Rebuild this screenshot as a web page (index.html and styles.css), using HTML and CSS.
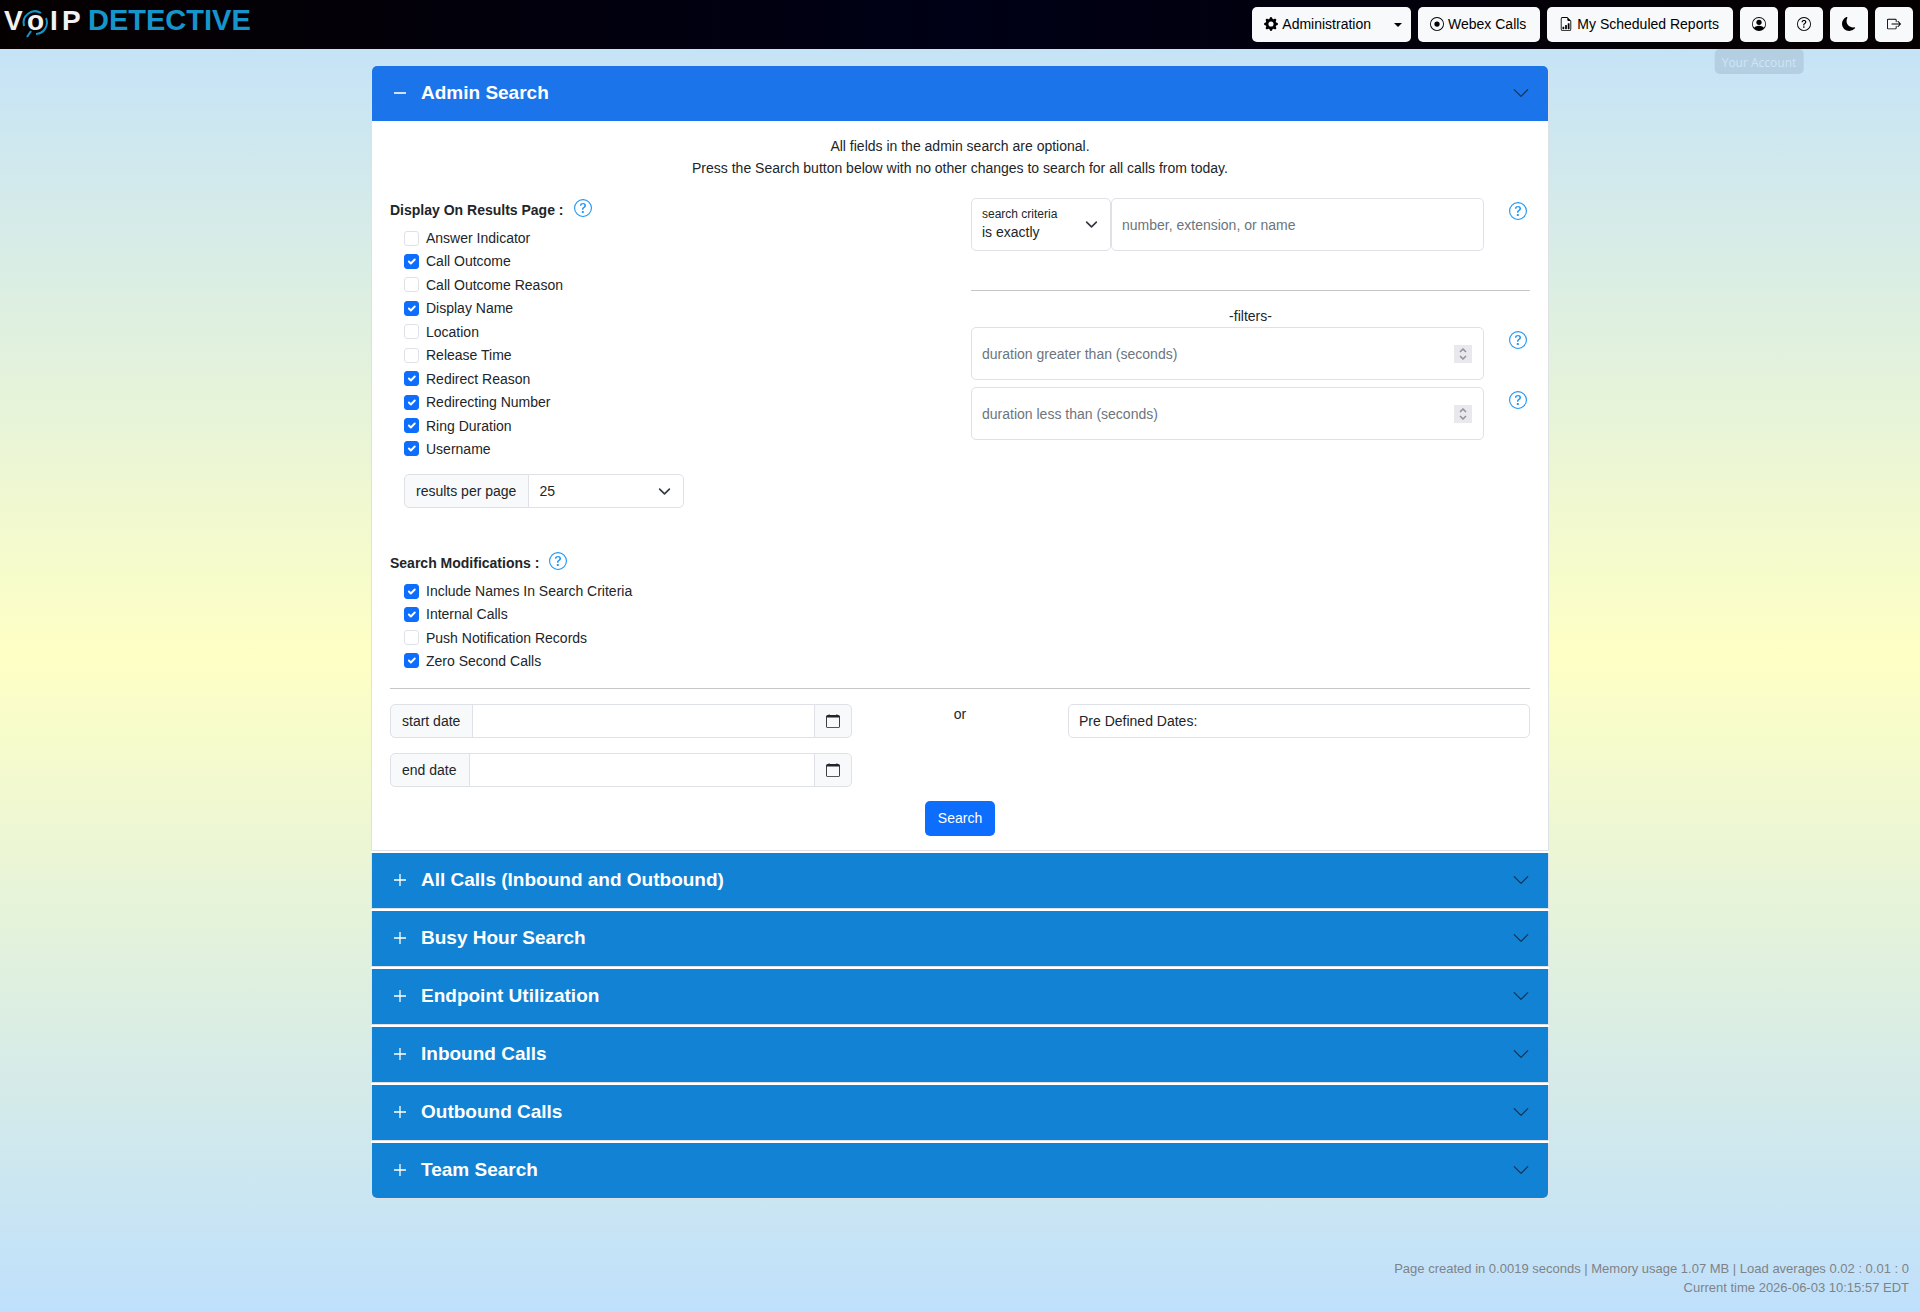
FILE: index.html
```html
<!DOCTYPE html>
<html lang="en">
<head>
<meta charset="utf-8">
<meta name="viewport" content="width=device-width, initial-scale=1">
<title>VoIP Detective</title>
<link rel="stylesheet" href="styles.css">
</head>
<body>
<svg class="sprite" aria-hidden="true">
  <symbol id="i-gear" viewBox="0 0 16 16"><path d="M9.405 1.05c-.413-1.4-2.397-1.4-2.81 0l-.1.34a1.464 1.464 0 0 1-2.105.872l-.31-.17c-1.283-.698-2.686.705-1.987 1.987l.169.311c.446.82.023 1.841-.872 2.105l-.34.1c-1.4.413-1.4 2.397 0 2.81l.34.1a1.464 1.464 0 0 1 .872 2.105l-.17.31c-.698 1.283.705 2.686 1.987 1.987l.311-.169a1.464 1.464 0 0 1 2.105.872l.1.34c.413 1.4 2.397 1.4 2.81 0l.1-.34a1.464 1.464 0 0 1 2.105-.872l.31.17c1.283.698 2.686-.705 1.987-1.987l-.169-.311a1.464 1.464 0 0 1 .872-2.105l.34-.1c1.4-.413 1.4-2.397 0-2.81l-.34-.1a1.464 1.464 0 0 1-.872-2.105l.17-.31c.698-1.283-.705-2.686-1.987-1.987l-.311.169a1.464 1.464 0 0 1-2.105-.872zM8 10.93a2.929 2.929 0 1 1 0-5.86 2.929 2.929 0 0 1 0 5.858z"/></symbol>
  <symbol id="i-record" viewBox="0 0 16 16"><path d="M8 15A7 7 0 1 1 8 1a7 7 0 0 1 0 14m0 1A8 8 0 1 0 8 0a8 8 0 0 0 0 16"/><path d="M11 8a3 3 0 1 1-6 0 3 3 0 0 1 6 0"/></symbol>
  <symbol id="i-report" viewBox="0 0 16 16"><path d="M10 13.5a.5.5 0 0 0 .5.5h1a.5.5 0 0 0 .5-.5v-6a.5.5 0 0 0-.5-.5h-1a.5.5 0 0 0-.5.5zm-2.5.5a.5.5 0 0 1-.5-.5v-4a.5.5 0 0 1 .5-.5h1a.5.5 0 0 1 .5.5v4a.5.5 0 0 1-.5.5zm-3 0a.5.5 0 0 1-.5-.5v-2a.5.5 0 0 1 .5-.5h1a.5.5 0 0 1 .5.5v2a.5.5 0 0 1-.5.5z"/><path d="M14 14V4.5L9.5 0H4a2 2 0 0 0-2 2v12a2 2 0 0 0 2 2h8a2 2 0 0 0 2-2M9.5 3A1.5 1.5 0 0 0 11 4.5h2V14a1 1 0 0 1-1 1H4a1 1 0 0 1-1-1V2a1 1 0 0 1 1-1h5.500z"/></symbol>
  <symbol id="i-person" viewBox="0 0 16 16"><path d="M11 6a3 3 0 1 1-6 0 3 3 0 0 1 6 0"/><path fill-rule="evenodd" d="M0 8a8 8 0 1 1 16 0A8 8 0 0 1 0 8m8-7a7 7 0 0 0-5.468 11.370C3.242 11.226 4.805 10 8 10s4.757 1.225 5.468 2.370A7 7 0 0 0 8 1"/></symbol>
  <symbol id="i-help" viewBox="0 0 16 16"><path d="M8 15A7 7 0 1 1 8 1a7 7 0 0 1 0 14m0 1A8 8 0 1 0 8 0a8 8 0 0 0 0 16"/><path d="M5.255 5.786a.237.237 0 0 0 .241.247h.825c.138 0 .248-.113.266-.25.09-.656.54-1.134 1.342-1.134.686 0 1.314.343 1.314 1.168 0 .635-.374.927-.965 1.371-.673.489-1.206 1.060-1.168 1.987l.003.217a.25.25 0 0 0 .25.246h.811a.25.25 0 0 0 .25-.25v-.105c0-.718.273-.927 1.010-1.486.609-.463 1.244-.977 1.244-2.056 0-1.511-1.276-2.241-2.673-2.241-1.267 0-2.655.59-2.750 2.286m1.557 5.763c0 .533.425.927 1.010.927.609 0 1.028-.394 1.028-.927 0-.552-.42-.94-1.029-.94-.584 0-1.009.388-1.009.94"/></symbol>
  <symbol id="i-moon" viewBox="0 0 16 16"><path d="M6 .278a.77.77 0 0 1 .08.858 7.2 7.2 0 0 0-.878 3.460c0 4.021 3.278 7.277 7.318 7.277q.792-.001 1.533-.16a.79.79 0 0 1 .81.316.73.73 0 0 1-.031.893A8.350 8.350 0 0 1 8.344 16C3.734 16 0 12.286 0 7.710 0 4.266 2.114 1.312 5.124.06A.75.75 0 0 1 6 .278"/></symbol>
  <symbol id="i-exit" viewBox="0 0 16 16"><path fill-rule="evenodd" d="M10 12.500a.5.5 0 0 1-.5.5h-8a.5.5 0 0 1-.5-.5v-9a.5.5 0 0 1 .5-.5h8a.5.5 0 0 1 .5.5v2a.5.5 0 0 0 1 0v-2A1.500 1.500 0 0 0 9.500 2h-8A1.500 1.500 0 0 0 0 3.500v9A1.500 1.500 0 0 0 1.500 14h8a1.500 1.500 0 0 0 1.500-1.500v-2a.5.5 0 0 0-1 0z"/><path fill-rule="evenodd" d="M15.854 8.354a.5.5 0 0 0 0-.708l-3-3a.5.5 0 0 0-.708.708L14.293 7.500H5.500a.5.5 0 0 0 0 1h8.793l-2.147 2.146a.5.5 0 0 0 .708.708z"/></symbol>
  <symbol id="i-calendar" viewBox="0 0 16 16"><path d="M3.500 0a.5.5 0 0 1 .5.5V1h8V.5a.5.5 0 0 1 1 0V1h1a2 2 0 0 1 2 2v11a2 2 0 0 1-2 2H2a2 2 0 0 1-2-2V3a2 2 0 0 1 2-2h1V.5a.5.5 0 0 1 .5-.5M1 4v10a1 1 0 0 0 1 1h12a1 1 0 0 0 1-1V4z"/></symbol>
  <symbol id="i-plus" viewBox="0 0 16 16"><path d="M8 2v12M2 8h12" fill="none" stroke="currentColor" stroke-width="1.300"/></symbol>
  <symbol id="i-minus" viewBox="0 0 16 16"><path d="M2 8h12" fill="none" stroke="currentColor" stroke-width="1.600"/></symbol>
  <symbol id="i-chevron" viewBox="0 0 16 16"><path d="m2 5 6 6 6-6" fill="none" stroke="currentColor" stroke-linecap="round" stroke-linejoin="round"/></symbol>
</svg>

<header class="topbar">
  <a class="brand" href="#" aria-label="VoIP Detective home">
    <svg class="logo" viewBox="0 0 256 42" aria-hidden="true">
      <g class="logo-text">
        <text x="4" y="30" class="logo-light">V</text>
        <text x="27" y="30" class="logo-light">o</text>
        <text x="50" y="30" class="logo-light">I</text>
        <text x="62" y="30" class="logo-light">P</text>
        <text x="88" y="30" class="logo-blue">DETECTIVE</text>
      </g>
      <g class="logo-lens">
        <path d="M24 26A11.500 11.500 0 0 1 41 13"/>
        <path d="M46 18A11.500 11.500 0 0 1 36 34"/>
        <path d="M31 31L27 37"/>
      </g>
    </svg>
  </a>
  <nav class="actions" aria-label="Main">
    <div class="split">
      <button type="button" class="btn"><svg class="icon"><use href="#i-gear"/></svg>Administration</button>
      <button type="button" class="btn btn-caret" aria-label="Toggle administration menu"><span class="caret"></span></button>
    </div>
    <button type="button" class="btn"><svg class="icon"><use href="#i-record"/></svg>Webex Calls</button>
    <button type="button" class="btn"><svg class="icon"><use href="#i-report"/></svg>My Scheduled Reports</button>
    <div class="tip-anchor">
      <button type="button" class="btn btn-icon" aria-label="Your Account"><svg class="icon"><use href="#i-person"/></svg></button>
      <span class="tooltip" role="tooltip">Your Account</span>
    </div>
    <button type="button" class="btn btn-icon" aria-label="Help"><svg class="icon"><use href="#i-help"/></svg></button>
    <button type="button" class="btn btn-icon" aria-label="Dark mode"><svg class="icon"><use href="#i-moon"/></svg></button>
    <button type="button" class="btn btn-icon" aria-label="Log out"><svg class="icon"><use href="#i-exit"/></svg></button>
  </nav>
</header>

<main class="accordion">
  <section class="item">
    <h2><button type="button" class="item-head is-open" aria-expanded="true"><svg class="sign"><use href="#i-minus"/></svg>Admin Search<svg class="chev"><use href="#i-chevron"/></svg></button></h2>
    <form class="panel">
      <p class="intro">All fields in the admin search are optional.<br>Press the Search button below with no other changes to search for all calls from today.</p>
      <div class="columns">
        <div>
          <div class="legend"><h3>Display On Results Page :</h3><button type="button" class="help" aria-label="Help on display options"><svg><use href="#i-help"/></svg></button></div>
          <div class="checks checks-display">
            <label><input type="checkbox">Answer Indicator</label>
            <label><input type="checkbox" checked>Call Outcome</label>
            <label><input type="checkbox">Call Outcome Reason</label>
            <label><input type="checkbox" checked>Display Name</label>
            <label><input type="checkbox">Location</label>
            <label><input type="checkbox">Release Time</label>
            <label><input type="checkbox" checked>Redirect Reason</label>
            <label><input type="checkbox" checked>Redirecting Number</label>
            <label><input type="checkbox" checked>Ring Duration</label>
            <label><input type="checkbox" checked>Username</label>
          </div>
          <div class="group per-page">
            <label class="addon" for="per-page">results per page</label>
            <select class="control select" id="per-page"><option>25</option><option>50</option><option>100</option></select>
          </div>
          <div class="legend"><h3>Search Modifications :</h3><button type="button" class="help" aria-label="Help on search modifications"><svg><use href="#i-help"/></svg></button></div>
          <div class="checks">
            <label><input type="checkbox" checked>Include Names In Search Criteria</label>
            <label><input type="checkbox" checked>Internal Calls</label>
            <label><input type="checkbox">Push Notification Records</label>
            <label><input type="checkbox" checked>Zero Second Calls</label>
          </div>
        </div>
        <div>
          <div class="field">
            <div class="criteria">
              <div class="floating">
                <select class="control select tall" id="criteria"><option>is exactly</option><option>contains</option></select>
                <label for="criteria">search criteria</label>
              </div>
              <input class="control tall" type="text" placeholder="number, extension, or name" aria-label="number, extension, or name">
            </div>
            <button type="button" class="help" aria-label="Help on search criteria"><svg><use href="#i-help"/></svg></button>
          </div>
          <hr class="rule rule-filters">
          <p class="filters">-filters-</p>
          <div class="field">
            <input class="control tall number" type="number" placeholder="duration greater than (seconds)" aria-label="duration greater than (seconds)">
            <button type="button" class="help" aria-label="Help on minimum duration"><svg><use href="#i-help"/></svg></button>
          </div>
          <div class="field">
            <input class="control tall number" type="number" placeholder="duration less than (seconds)" aria-label="duration less than (seconds)">
            <button type="button" class="help" aria-label="Help on maximum duration"><svg><use href="#i-help"/></svg></button>
          </div>
        </div>
      </div>
      <hr class="rule">
      <div class="dates">
        <div class="range">
          <div class="group">
            <label class="addon" for="start">start date</label>
            <input class="control" type="text" id="start">
            <button type="button" class="addon addon-btn" aria-label="Pick start date"><svg class="icon"><use href="#i-calendar"/></svg></button>
          </div>
          <div class="group">
            <label class="addon" for="end">end date</label>
            <input class="control" type="text" id="end">
            <button type="button" class="addon addon-btn" aria-label="Pick end date"><svg class="icon"><use href="#i-calendar"/></svg></button>
          </div>
        </div>
        <p class="or">or</p>
        <div class="group">
          <select class="control" aria-label="Pre defined dates"><option>Pre Defined Dates:</option></select>
        </div>
      </div>
      <button type="submit" class="submit">Search</button>
    </form>
  </section>
  <section class="item"><h2><button type="button" class="item-head" aria-expanded="false"><svg class="sign"><use href="#i-plus"/></svg>All Calls (Inbound and Outbound)<svg class="chev"><use href="#i-chevron"/></svg></button></h2></section>
  <section class="item"><h2><button type="button" class="item-head" aria-expanded="false"><svg class="sign"><use href="#i-plus"/></svg>Busy Hour Search<svg class="chev"><use href="#i-chevron"/></svg></button></h2></section>
  <section class="item"><h2><button type="button" class="item-head" aria-expanded="false"><svg class="sign"><use href="#i-plus"/></svg>Endpoint Utilization<svg class="chev"><use href="#i-chevron"/></svg></button></h2></section>
  <section class="item"><h2><button type="button" class="item-head" aria-expanded="false"><svg class="sign"><use href="#i-plus"/></svg>Inbound Calls<svg class="chev"><use href="#i-chevron"/></svg></button></h2></section>
  <section class="item"><h2><button type="button" class="item-head" aria-expanded="false"><svg class="sign"><use href="#i-plus"/></svg>Outbound Calls<svg class="chev"><use href="#i-chevron"/></svg></button></h2></section>
  <section class="item"><h2><button type="button" class="item-head" aria-expanded="false"><svg class="sign"><use href="#i-plus"/></svg>Team Search<svg class="chev"><use href="#i-chevron"/></svg></button></h2></section>
</main>

<footer class="stats">
  <p>Page created in 0.0019 seconds | Memory usage 1.07 MB | Load averages 0.02 : 0.01 : 0</p>
  <p>Current time 2026-06-03 10:15:57 EDT</p>
</footer>
</body>
</html>
```
FILE: styles.css
```css
*, *::before, *::after { box-sizing: border-box; }

body {
  margin: 0;
  min-height: 100vh;
  display: flex;
  flex-direction: column;
  font: 14px/22px "Liberation Sans", Arial, sans-serif;
  color: #212529;
  background: linear-gradient(#c1e1fb, #feffc4 50%, #bfe0fc);
}

h2, h3, p { margin: 0; }
button, input, select { font: inherit; color: inherit; margin: 0; }
svg { fill: currentColor; flex: none; }
.sprite { display: none; }

/* Top bar */
.topbar {
  display: flex;
  justify-content: space-between;
  height: 49px;
  background: linear-gradient(90deg, #050000, #000016 50%, #050000);
}
.brand { display: block; }
.logo { display: block; width: 256px; height: 42px; }
.logo-text { font: bold 28px "Liberation Sans", Arial, sans-serif; }
.logo-light { fill: #f2f2f2; }
.logo-blue { fill: #1496cc; font-size: 29px; }
.logo-lens { fill: none; stroke: #1496cc; stroke-width: 2; }

.actions { display: flex; gap: 7px; padding: 7px 7px 0 0; }
.split { display: flex; }
.btn {
  display: inline-flex;
  align-items: center;
  justify-content: center;
  gap: 4px;
  height: 35px;
  padding: 0 14px 1px 12px;
  border: 0;
  border-radius: 5px;
  background: #f8f9fa;
  color: #000;
  white-space: nowrap;
}
.split .btn:first-child { border-radius: 5px 0 0 5px; }
.split .btn-caret { width: 26px; padding: 0; border-radius: 0 5px 5px 0; }
.btn-icon { width: 38px; padding: 0 0 1px; }
.icon { width: 14px; height: 14px; }
.caret { border: 4px solid transparent; border-top-color: #000; border-bottom: 0; }

.tip-anchor { position: relative; }
.tooltip {
  position: absolute;
  top: 42px;
  left: 50%;
  transform: translateX(-50%);
  padding: 3px 7px 1px;
  border-radius: 5px;
  background: #b4cfe2;
  color: #cfe5f6;
  font: 12px/21px "Open Sans", "Noto Sans", sans-serif;
  white-space: nowrap;
}

/* Accordion */
.accordion { width: 100%; max-width: 1178px; margin: 16px auto 0; }
.item {
  margin-bottom: 2px;
  border: 1px solid #dee2e6;
  border-top: 0;
  background: #fff;
  box-shadow: 0 2px #fff;
}
.item:first-child { border-top: 1px solid #cfe2f5; border-radius: 6px 6px 0 0; }
.item:last-child { border-radius: 0 0 6px 6px; box-shadow: none; }
.item:first-child .item-head { border-radius: 5px 5px 0 0; }
.item:last-child .item-head { border-radius: 0 0 5px 5px; }
.item-head {
  display: flex;
  align-items: center;
  gap: 13px;
  width: 100%;
  height: 55px;
  padding: 0 18px 1px 20px;
  border: 0;
  background: #1182d4;
  color: #fff;
  font-size: 19px;
  font-weight: bold;
  text-align: left;
}
.item-head.is-open { background: #1b74e9; }
.sign { width: 16px; height: 16px; }
.chev { width: 18px; height: 18px; margin-left: auto; color: #15304f; }

/* Admin search form */
.panel { padding: 14px 18px; }
.intro { text-align: center; }
.columns {
  display: grid;
  grid-template-columns: 1fr 1fr;
  gap: 22px;
  margin-top: 19px;
}
.legend { display: flex; gap: 10px; height: 24px; }
.legend h3 { font-size: 14px; line-height: 25px; }
.help {
  display: block;
  width: 18px;
  height: 18px;
  padding: 0;
  border: 0;
  background: none;
  color: #2196f3;
}
.help svg { display: block; width: 18px; height: 18px; }
.legend .help { margin-top: 1px; }

.checks {
  display: flex;
  flex-direction: column;
  justify-content: space-between;
  height: 92px;
  margin: 5px 0 16px;
  padding-left: 14px;
}
.checks-display { height: 233px; margin-bottom: 14px; }
.checks label { display: flex; align-items: center; gap: 7px; }
.checks input {
  appearance: none;
  width: 15px;
  height: 15px;
  border: 1px solid #dee2e6;
  border-radius: 3px;
  background: #fff;
}
.checks input:checked {
  border-color: #0d6efd;
  background: #0d6efd url("data:image/svg+xml,%3Csvg xmlns='http://www.w3.org/2000/svg' viewBox='0 0 20 20'%3E%3Cpath fill='none' stroke='%23fff' stroke-linecap='round' stroke-linejoin='round' stroke-width='3' d='m6 10 3 3 6-6'/%3E%3C/svg%3E") center / 13px no-repeat;
}

.group { display: flex; height: 34px; }
.addon {
  display: flex;
  align-items: center;
  padding: 0 12px 0 11px;
  border: 1px solid #dee2e6;
  border-radius: 5px 0 0 5px;
  background: #f8f9fa;
  white-space: nowrap;
}
.addon-btn { padding: 0 11px; border-radius: 0 5px 5px 0; }
.control {
  appearance: none;
  flex: 1;
  min-width: 0;
  width: 100%;
  padding: 0 10px;
  border: 1px solid #dee2e6;
  border-radius: 5px;
  background: #fff;
}
.control::placeholder { color: #6c757d; opacity: 1; }
.addon + .control { margin-left: -1px; border-radius: 0; }
.control + .addon { margin-left: -1px; }
.select {
  background: #fff url("data:image/svg+xml,%3Csvg xmlns='http://www.w3.org/2000/svg' viewBox='0 0 16 16'%3E%3Cpath fill='none' stroke='%23343a40' stroke-linecap='round' stroke-linejoin='round' stroke-width='2' d='m2 5 6 6 6-6'/%3E%3C/svg%3E") right 12px center / 13px no-repeat;
}
.per-page { width: 280px; margin: 0 0 43px 14px; }
.per-page .select { border-radius: 0 5px 5px 0; }

.field {
  display: grid;
  grid-template-columns: 1fr 18px;
  gap: 25px;
  padding-right: 3px;
  margin-bottom: 7px;
}
.field .help { margin-top: 4px; }
.criteria { display: flex; }
.tall { height: 53px; }
.floating { position: relative; width: 140px; flex: none; }
.floating label { position: absolute; top: 7px; left: 11px; font-size: 12px; line-height: 18px; }
.floating .control { padding-top: 14px; }
.number {
  appearance: textfield;
  background: #fff url("data:image/svg+xml,%3Csvg xmlns='http://www.w3.org/2000/svg' viewBox='0 0 18 18'%3E%3Cpath fill='%23e9e9ed' d='M0 0h18v18H0z'/%3E%3Cpath fill='none' stroke='%238f8f9d' stroke-width='1.500' d='m6 7 3-3 3 3M6 11l3 3 3-3'/%3E%3C/svg%3E") right 11px center / 18px no-repeat;
}
.number::-webkit-inner-spin-button { appearance: none; }

.rule { height: 1px; margin: 15px 0; border: 0; background: #c5c6c8; }
.columns + .rule { margin-top: 0; }
.rule-filters { margin-top: 39px; }
.filters { text-align: center; line-height: 21px; }

.dates {
  display: grid;
  grid-template-columns: 1fr 168px 1fr;
  gap: 24px;
}
.range { display: grid; gap: 15px; }
.or { text-align: center; line-height: 20px; }
.submit {
  display: block;
  height: 35px;
  margin: 14px auto 0;
  padding: 0 13px 1px;
  border: 0;
  border-radius: 5px;
  background: #0d6efd;
  color: #fff;
}

/* Page statistics */
.stats {
  margin-top: auto;
  padding: 40px 11px 15px;
  color: #7f8387;
  font-size: 13px;
  line-height: 19px;
  text-align: right;
}
```
